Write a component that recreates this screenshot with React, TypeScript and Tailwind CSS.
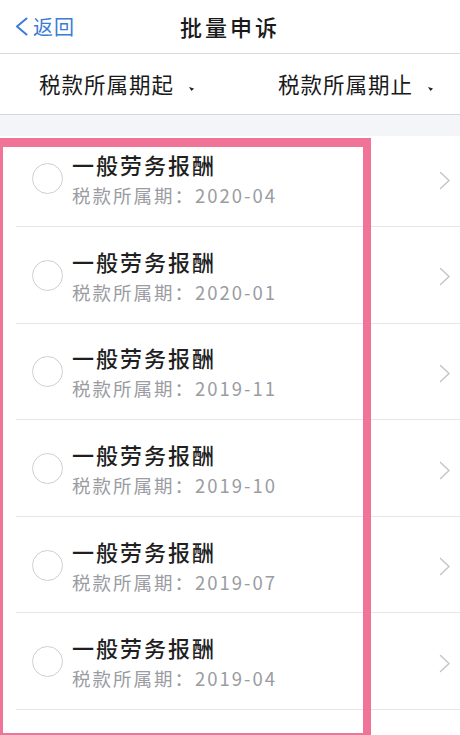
const periods = ["2020-04", "2020-01", "2019-11", "2019-10", "2019-07", "2019-04", "2019-01"];

function Caret() {
  return (
    <svg width="5" height="4" viewBox="0 0 5 4" className="ml-[15px] mt-[10px]">
      <path d="M0 0 L5 1.5 L2.5 4 Z" fill="#222" />
    </svg>
  );
}

function Row({ period }: { period: string }) {
  return (
    <div className="relative flex h-[96.6px] shrink-0 items-center">
      <div className="ml-[32px] h-[31px] w-[31px] shrink-0 rounded-full border-[1.5px] border-[#cfcfcf]" />
      <div className="ml-[9px] flex flex-1 flex-col">
        <div className="text-[22px] font-medium leading-[28px] tracking-[2px] text-[#1f1f1f]">一般劳务报酬</div>
        <div className="mt-[5px] text-[18.5px] leading-[24px] tracking-[2px] text-[#9a9ca2]">
          税款所属期：{period}
        </div>
      </div>
      {/* chevron */}
      <svg width="12" height="19" viewBox="0 0 12 19" className="mr-[9px] mt-[3px]" fill="none">
        <path d="M1.5 1.5 L10 9.5 L1.5 17.5" stroke="#c6c6ca" strokeWidth="1.5" strokeLinecap="round" strokeLinejoin="round" />
      </svg>
      <div className="absolute bottom-0 left-[16px] right-0 h-px bg-[#e6e6e8]" />
    </div>
  );
}

export default function App() {
  return (
    <div
      className="relative h-[735px] w-[460px] overflow-hidden bg-white"
      style={{ fontFamily: '"Noto Sans CJK SC", "Noto Sans", sans-serif' }}
    >
      {/* Nav bar */}
      <div className="relative flex h-[54px] items-center border-b border-[#dcdcdf]">
        <div className="ml-[14px] flex items-center text-[20px] tracking-[1px] text-[#3d7bd6]">
          <svg width="15" height="19" viewBox="0 0 15 19" fill="none" className="mr-[4px]">
            <path d="M12.5 1.5 L3 9.5 L12.5 17.5" stroke="#3d7bd6" strokeWidth="2" strokeLinecap="round" strokeLinejoin="round" />
          </svg>
          <span>返回</span>
        </div>
        <div className="pointer-events-none absolute left-0 right-0 text-center text-[22px] font-medium tracking-[3px] text-[#1a1a1a]">
          批量申诉
        </div>
      </div>

      {/* Filter bar */}
      <div className="flex h-[61px] items-center border-b border-[#d8d8dc] text-[21.5px] tracking-[1px] text-[#1a1a1a]">
        <div className="ml-[39px] flex items-center">
          税款所属期起
          <Caret />
        </div>
        <div className="ml-[84px] flex items-center">
          税款所属期止
          <Caret />
        </div>
      </div>

      <div className="h-[21px] bg-[#f4f5f8]" />

      {/* List */}
      <div className="flex flex-col overflow-hidden">
        <div className="-mt-[5.5px] flex flex-col">
          {periods.map((p, i) => (
            <Row key={i} period={p} />
          ))}
        </div>
      </div>

      {/* Highlight box */}
      <div className="pointer-events-none absolute left-0 top-[138px] h-[597px] w-[371px] border-b-[2px] border-l-[3px] border-r-[8px] border-t-[9px] border-[#f07398]" />
    </div>
  );
}
